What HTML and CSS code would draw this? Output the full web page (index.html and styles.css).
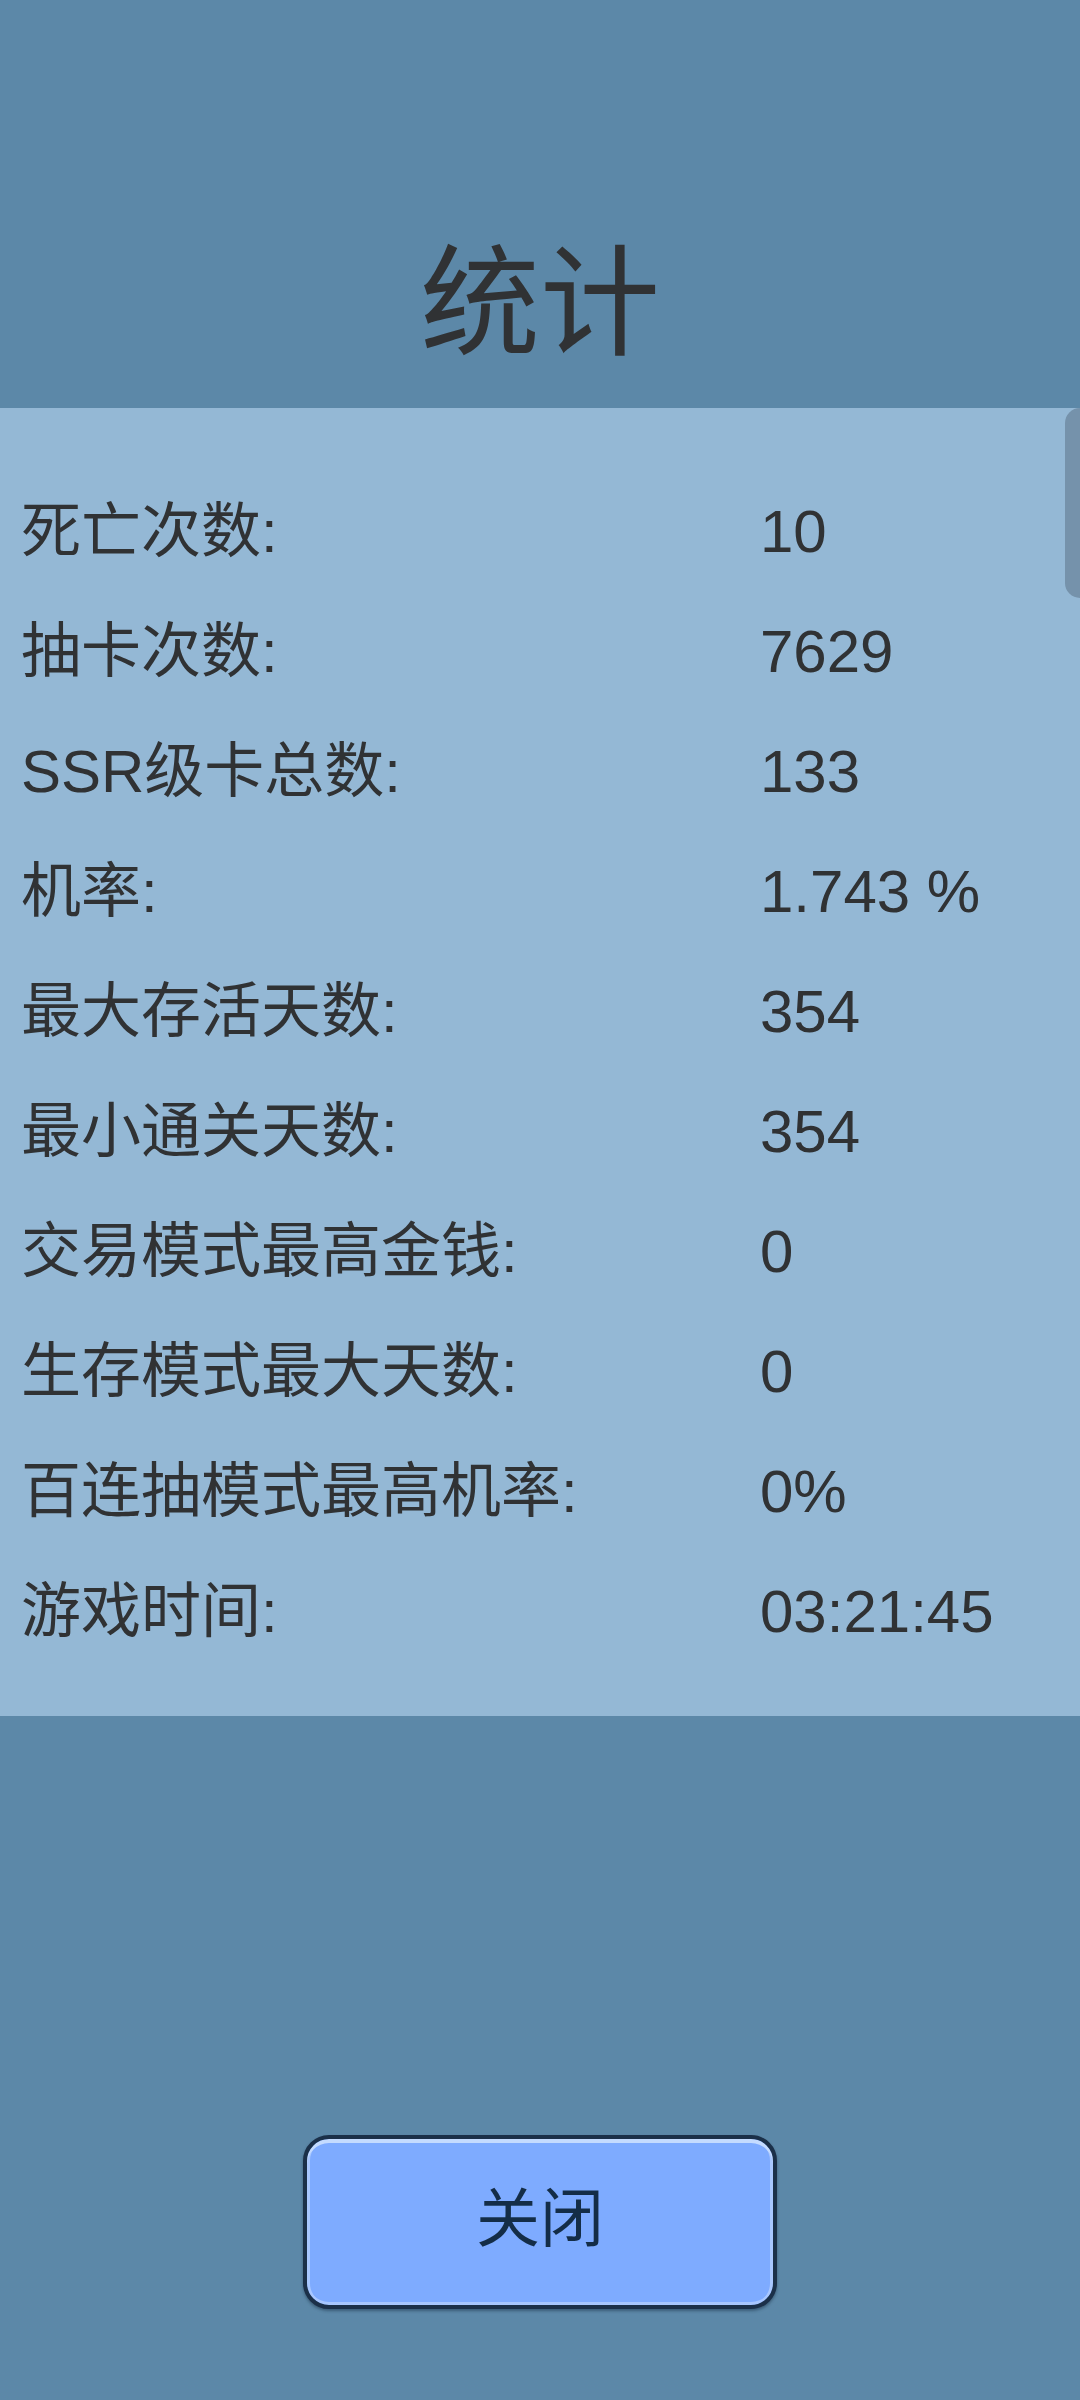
FILE: index.html
```html
<!DOCTYPE html>
<html lang="zh-CN">
<head>
<meta charset="utf-8">
<title>统计</title>
<link rel="stylesheet" href="styles.css">
</head>
<body>
<div class="screen">
  <header class="header">
    <h1 class="title">统计</h1>
  </header>
  <section class="panel">
    <div class="scrollbar"></div>
    <div class="rows">
      <div class="row"><span class="label">死亡次数:</span><span class="value">10</span></div>
      <div class="row"><span class="label">抽卡次数:</span><span class="value">7629</span></div>
      <div class="row"><span class="label">SSR级卡总数:</span><span class="value">133</span></div>
      <div class="row"><span class="label">机率:</span><span class="value">1.743 %</span></div>
      <div class="row"><span class="label">最大存活天数:</span><span class="value">354</span></div>
      <div class="row"><span class="label">最小通关天数:</span><span class="value">354</span></div>
      <div class="row"><span class="label">交易模式最高金钱:</span><span class="value">0</span></div>
      <div class="row"><span class="label">生存模式最大天数:</span><span class="value">0</span></div>
      <div class="row"><span class="label">百连抽模式最高机率:</span><span class="value">0%</span></div>
      <div class="row"><span class="label">游戏时间:</span><span class="value">03:21:45</span></div>
    </div>
  </section>
  <footer class="footer">
    <button class="close-btn" type="button">关闭</button>
  </footer>
</div>
</body>
</html>
```

FILE: styles.css
```css
* { box-sizing: border-box; }

html, body {
  margin: 0;
  padding: 0;
  width: 1080px;
  height: 2400px;
  overflow: hidden;
}

body {
  background: #5c88a8;
  font-family: "Liberation Sans", "Noto Sans CJK SC", sans-serif;
  color: #303234;
}

.screen {
  display: flex;
  flex-direction: column;
  height: 2400px;
}

.header {
  height: 408px;
  padding-top: 244px;
  flex: none;
}

.title {
  margin: 0;
  font-weight: normal;
  font-size: 120px;
  line-height: 120px;
  text-align: center;
  color: #303234;
}

.panel {
  position: relative;
  background: #94b8d5;
  padding: 64px 0 44px 21px;
  flex: none;
}

.scrollbar {
  position: absolute;
  top: 0;
  right: 0;
  width: 15px;
  height: 190px;
  background: #7592ab;
  border-radius: 15px 0 0 15px;
}

.rows {
  display: flex;
  flex-direction: column;
}

.row {
  display: grid;
  grid-template-columns: 739px 1fr;
  height: 120px;
  align-items: center;
  font-size: 60px;
  line-height: 120px;
}

.label, .value {
  white-space: nowrap;
}

.footer {
  margin-top: auto;
  display: flex;
  justify-content: center;
  padding-bottom: 91px;
}

.close-btn {
  width: 474px;
  height: 174px;
  border: 4px solid #1b3049;
  border-radius: 26px;
  background: #7eabff;
  box-shadow:
    inset 0 4px 0 #c4dbff,
    inset 3px 0 0 #a8c7ff,
    inset -3px 0 0 #a8c7ff,
    inset 0 -3px 0 #a8c7ff,
    0 2px 3px rgba(20, 40, 60, 0.45);
  font-family: "Noto Sans CJK SC", sans-serif;
  font-size: 64px;
  line-height: 1;
  color: #142d47;
  padding: 0 0 18px 0;
  cursor: pointer;
}
```
